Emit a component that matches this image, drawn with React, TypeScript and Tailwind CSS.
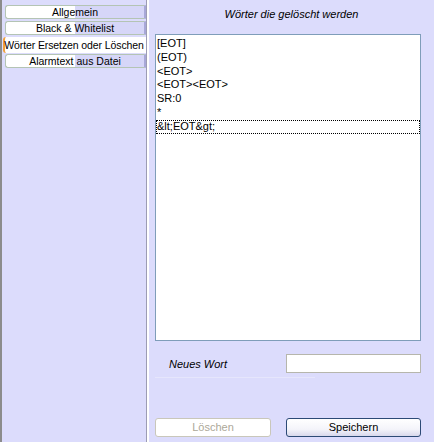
const tabs = [
  { label: "Allgemein" },
  { label: "Black & Whitelist" },
  { label: "Wörter Ersetzen oder Löschen", active: true },
  { label: "Alarmtext aus Datei" },
];

const words = ["[EOT]", "(EOT)", "<EOT>", "<EOT><EOT>", "SR:0", "*", "&lt;EOT&gt;"];

function Tab({ label, active }: { label: string; active?: boolean }) {
  if (active) {
    return (
      <div className="-mb-[1px] -ml-[2px] flex h-[16px] items-center justify-center whitespace-nowrap rounded-l-[3px] border-l-2 border-[#f0a03c] bg-white pr-[3px] text-[10.5px] leading-none tracking-[-0.1px] text-black">
        {label}
      </div>
    );
  }
  return (
    <div className="flex h-[14px] items-center justify-center whitespace-nowrap rounded-l-[3px] border border-r-2 border-[#b4c4b4] border-r-[#a8a8d8] bg-[linear-gradient(to_right,#ffffff_50%,#d6d6f8_50%)] text-[10.5px] leading-none text-black">
      {label}
    </div>
  );
}

export default function App() {
  return (
    <div
      className="flex h-[442px] w-[434px] overflow-hidden bg-[#dcdcfc] text-black"
      style={{ fontFamily: '"Liberation Sans", Arial, sans-serif' }}
    >
      {/* navigation column */}
      <div className="flex w-[147px] shrink-0 flex-col gap-[2px] border-l-2 border-r border-l-[#8c8c8c] border-r-[#9c9cb4] pl-[3px] pt-[5px]">
        {tabs.map((t) => (
          <Tab key={t.label} {...t} />
        ))}
      </div>

      <div className="w-[2px] shrink-0 bg-white" />

      {/* content panel */}
      <div className="flex flex-1 flex-col px-[6px]">
        <div className="h-[34px] pt-[9px] text-center text-[11px] italic leading-none">
          Wörter die gelöscht werden
        </div>

        <div className="h-[307px] w-[266px] border border-[#7f9db9] bg-white pt-[2px]">
          {words.map((w, i) => (
            <div
              key={w}
              className={
                "h-[13.8px] pl-[1px] text-[11px] leading-[13.8px] " +
                (i === words.length - 1 ? "outline-1 outline-dotted outline-offset-[-1px] outline-black" : "")
              }
            >
              {w}
            </div>
          ))}
        </div>

        <div className="mt-[13px] flex h-[19px] items-center">
          <div className="w-[131px] pl-[14px] pt-[1px] text-[11px] italic leading-none">Neues Wort</div>
          <div className="h-[19px] w-[135px] border border-[#b6b6ac] bg-white" />
        </div>
        <div className="mt-[4px] h-px w-[160px] bg-[#e6e6fc]" />

        <div className="mt-auto mb-[5px] flex items-center">
          <button className="h-[19px] w-[116px] rounded-[3px] border border-[#c9c7ba] bg-white text-[11px] leading-none text-[#aca899]">
            Löschen
          </button>
          <button className="ml-[15px] h-[19px] w-[135px] rounded-[3px] border border-[#2c4a76] bg-[linear-gradient(to_bottom,#ffffff_0%,#f4f4fa_60%,#d8d8ec_100%)] text-[11px] leading-none text-black">
            Speichern
          </button>
        </div>
      </div>
    </div>
  );
}
